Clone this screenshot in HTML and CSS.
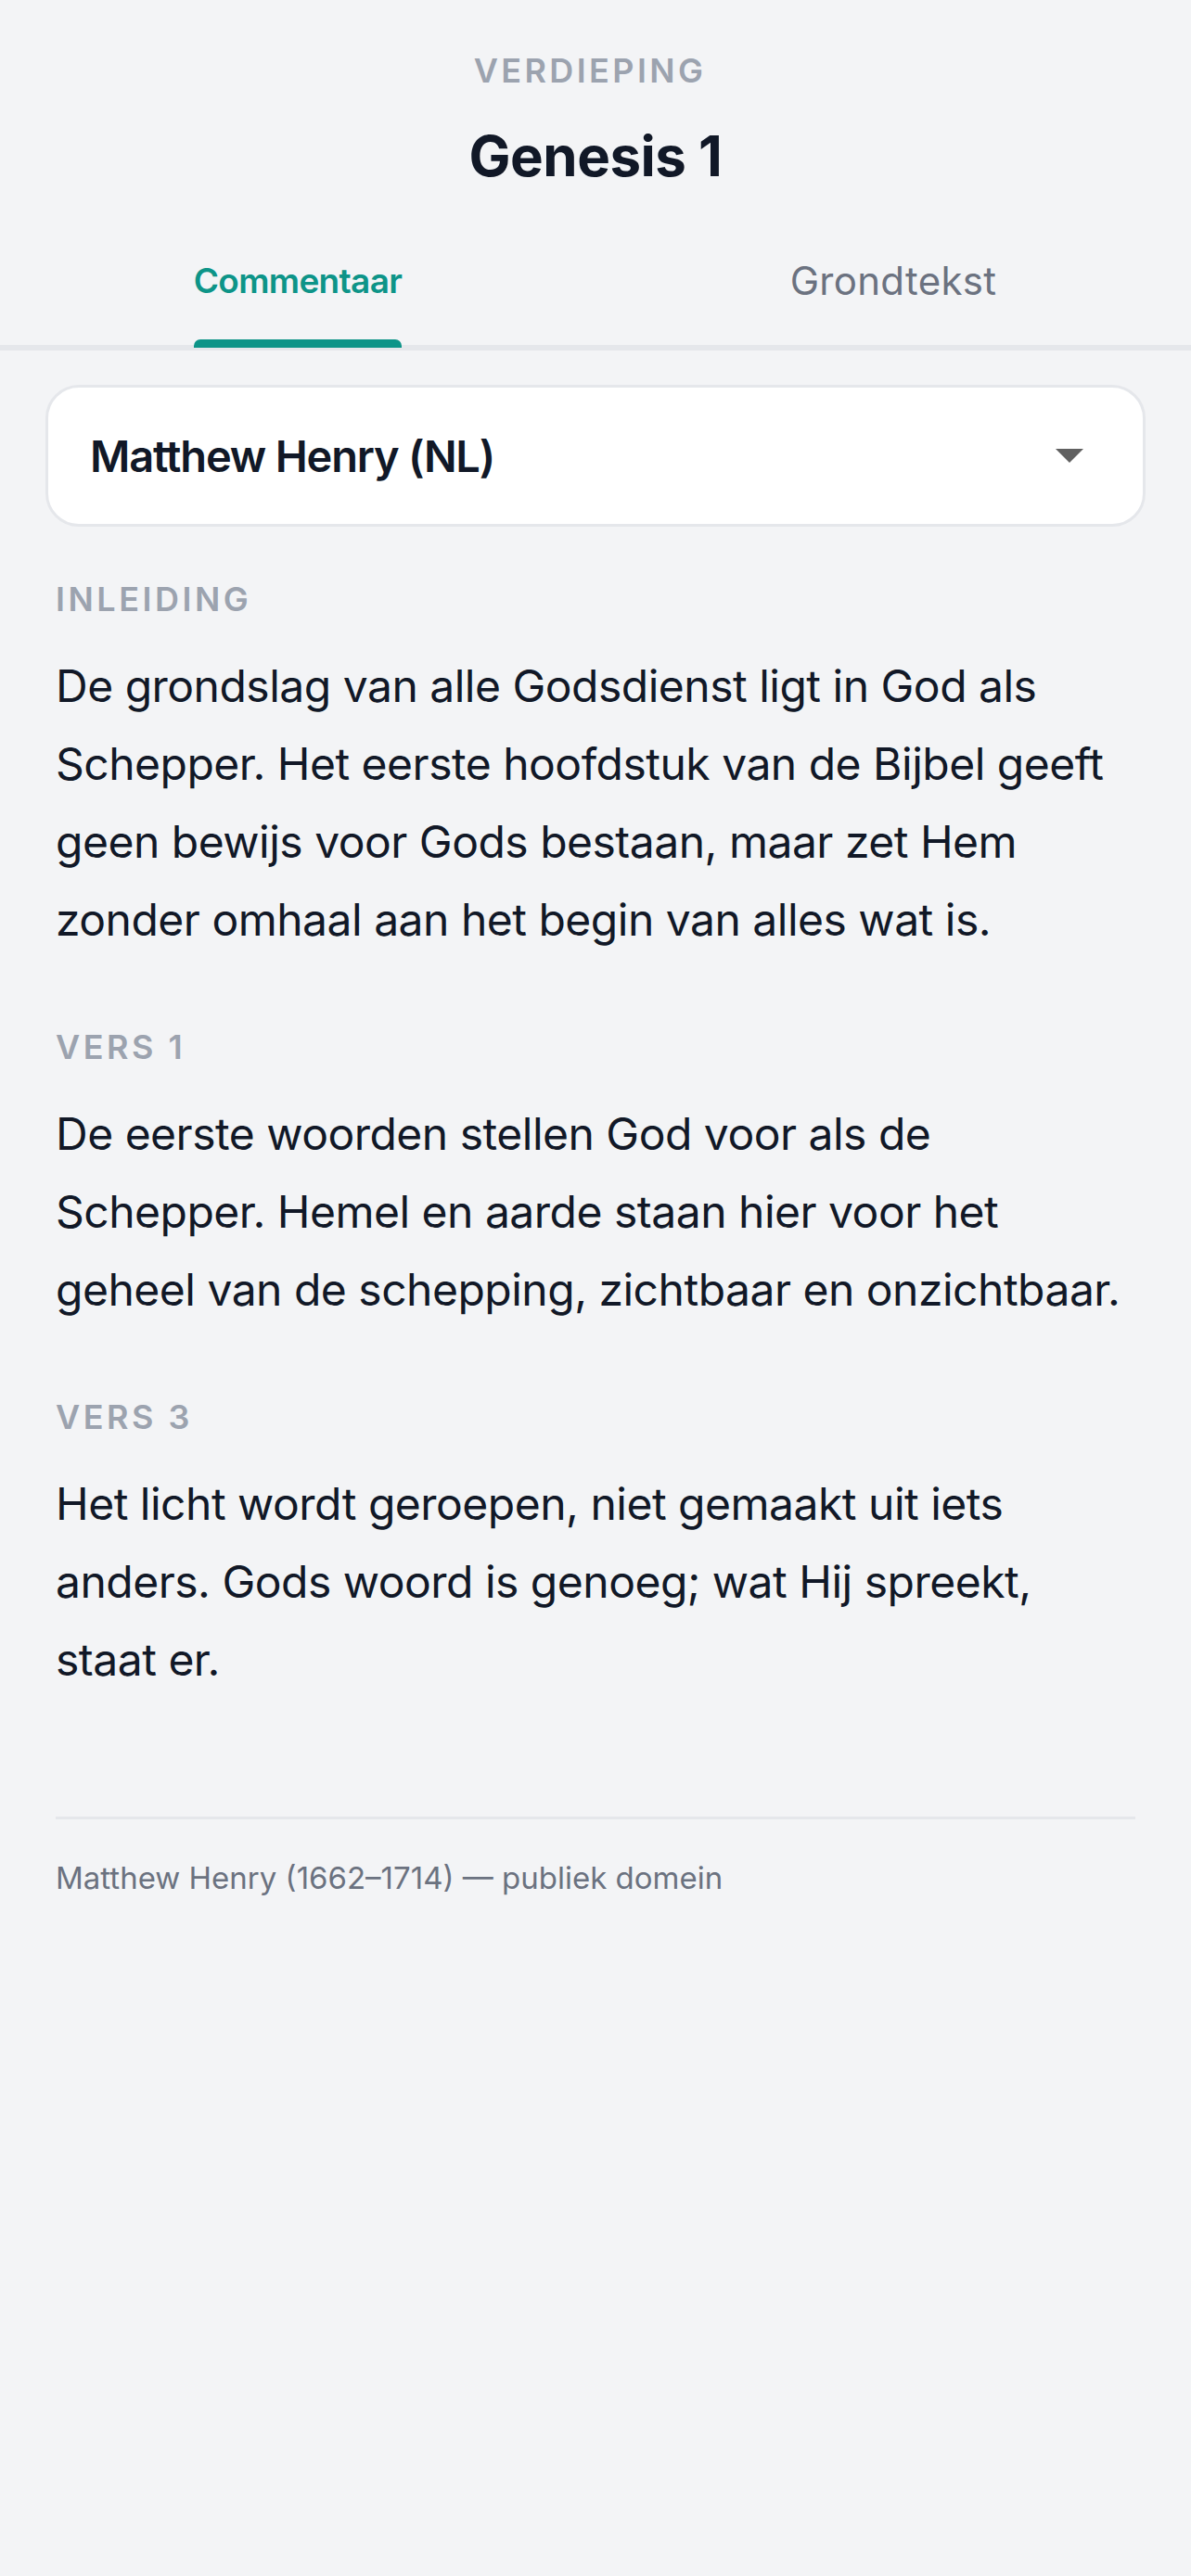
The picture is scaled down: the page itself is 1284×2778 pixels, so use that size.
FILE: index.html
```html
<!DOCTYPE html>
<html lang="nl">
<head>
<meta charset="utf-8">
<title>Verdieping – Genesis 1</title>
<link rel="stylesheet" href="styles.css">
</head>
<body>
<header class="header">
  <div class="eyebrow">Verdieping</div>
  <h1 class="title">Genesis 1</h1>
</header>
<nav class="tabs">
  <button class="tab tab-active"><span class="tab-label">Commentaar</span></button>
  <button class="tab"><span class="tab-label">Grondtekst</span></button>
</nav>
<main class="content">
  <div class="select">
    <span class="select-value">Matthew Henry (NL)</span>
    <svg class="select-arrow" viewBox="0 0 30 15" width="30" height="15" aria-hidden="true"><polygon points="0,0 30,0 15,15" fill="#606060"/></svg>
  </div>
  <section class="block block-first">
    <h2 class="label">Inleiding</h2>
    <p class="text">De grondslag van alle Godsdienst ligt in God als Schepper. Het eerste hoofdstuk van de Bijbel geeft geen bewijs voor Gods bestaan, maar zet Hem zonder omhaal aan het begin van alles wat is.</p>
  </section>
  <section class="block">
    <h2 class="label">Vers 1</h2>
    <p class="text">De eerste woorden stellen God voor als de Schepper. Hemel en aarde staan hier voor het geheel van de schepping, zichtbaar en onzichtbaar.</p>
  </section>
  <section class="block">
    <h2 class="label">Vers 3</h2>
    <p class="text">Het licht wordt geroepen, niet gemaakt uit iets anders. Gods woord is genoeg; wat Hij spreekt, staat er.</p>
  </section>
  <footer class="footer">Matthew Henry (1662–1714) — publiek domein</footer>
</main>
</body>
</html>
```
FILE: styles.css
```css
* { box-sizing: border-box; }
html, body {
  margin: 0;
  padding: 0;
  background: #f3f4f6;
}
body {
  font-family: Inter, "Noto Sans", "Liberation Sans", sans-serif;
  color: #111827;
  min-height: 2778px;
}
.header {
  padding-top: 54px;
  text-align: center;
}
.eyebrow {
  padding-right: 12px;
  font-size: 36px;
  line-height: 44px;
  font-weight: 600;
  letter-spacing: 3.4px;
  text-transform: uppercase;
  color: #9ca3af;
}
.title {
  margin: 34px 0 0;
  font-size: 60px;
  line-height: 72px;
  font-weight: 700;
  letter-spacing: -0.5px;
  color: #111827;
}
.tabs {
  display: flex;
  border-bottom: 6px solid #e5e7eb;
}
.tab {
  flex: 1;
  display: flex;
  justify-content: center;
  margin: 0;
  padding: 75px 0 0;
  border: 0;
  background: none;
  font-family: inherit;
  font-size: 42px;
  line-height: 48px;
  font-weight: 400;
  letter-spacing: 0.3px;
  color: #6b7280;
}
.tab-label {
  position: relative;
  display: block;
  padding-bottom: 45px;
}
.tab-active {
  font-size: 37px;
  font-weight: 600;
  letter-spacing: -0.7px;
  color: #0d9488;
}
.tab-active .tab-label::after {
  content: "";
  position: absolute;
  left: 0;
  right: 0;
  bottom: -3px;
  height: 9px;
  border-radius: 7px 7px 0 0;
  background: #0d9488;
}
.content {
  padding: 0 60px;
}
.select {
  display: flex;
  align-items: center;
  justify-content: space-between;
  height: 153px;
  margin: 37px -11px 0;
  padding: 0 64px 0 45px;
  background: #ffffff;
  border: 3px solid #e5e7eb;
  border-radius: 36px;
}
.select-value {
  font-size: 47px;
  font-weight: 600;
  letter-spacing: -1.2px;
  color: #111827;
}
.select-arrow {
  display: block;
  flex: none;
}
.block {
  margin-top: 73px;
}
.block-first {
  margin-top: 56px;
}
.label {
  margin: 0;
  font-size: 36px;
  line-height: 44px;
  font-weight: 600;
  letter-spacing: 3.5px;
  text-transform: uppercase;
  color: #9ca3af;
}
.text {
  margin: 30px 0 0;
  font-size: 48px;
  line-height: 84px;
  font-weight: 400;
  letter-spacing: -0.5px;
  color: #111827;
}
.footer {
  margin-top: 127px;
  padding-top: 43px;
  border-top: 3px solid #e5e7eb;
  font-size: 33px;
  line-height: 40px;
  color: #6b7280;
}
```
